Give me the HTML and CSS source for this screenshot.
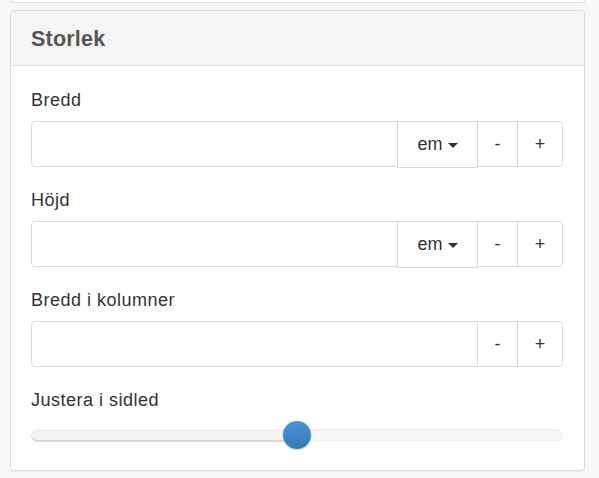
FILE: index.html
```html
<!DOCTYPE html>
<html lang="sv">
<head>
<meta charset="utf-8">
<link rel="stylesheet" href="styles.css">
</head>
<body>
<div class="page">
  <div class="prev-panel"></div>
  <div class="panel">
    <div class="panel-heading"><h3 class="panel-title">Storlek</h3></div>
    <div class="panel-body">
      <div class="form-group">
        <label class="label">Bredd</label>
        <div class="input-group">
          <input class="form-control" type="text">
          <button class="btn btn-unit">em <span class="caret"></span></button>
          <button class="btn btn-minus">-</button>
          <button class="btn btn-plus">+</button>
        </div>
      </div>
      <div class="form-group">
        <label class="label">Höjd</label>
        <div class="input-group">
          <input class="form-control" type="text">
          <button class="btn btn-unit">em <span class="caret"></span></button>
          <button class="btn btn-minus">-</button>
          <button class="btn btn-plus">+</button>
        </div>
      </div>
      <div class="form-group">
        <label class="label">Bredd i kolumner</label>
        <div class="input-group">
          <input class="form-control" type="text">
          <button class="btn btn-minus">-</button>
          <button class="btn btn-plus">+</button>
        </div>
      </div>
      <div class="form-group last">
        <label class="label">Justera i sidled</label>
        <div class="slider">
          <div class="slider-fill" style="width: 50%"></div>
          <div class="slider-handle" style="left: 50%"></div>
        </div>
      </div>
    </div>
  </div>
</div>
</body>
</html>
```
FILE: styles.css
```css
* { box-sizing: border-box; }
html, body { margin: 0; padding: 0; }
body {
  background: #f8f8f8;
  font-family: "Liberation Sans", Arial, Helvetica, sans-serif;
  color: #333;
  width: 599px;
  height: 478px;
  overflow: hidden;
}
.page {
  padding: 0 14px 0 10px;
}
.prev-panel {
  height: 3px;
  background: #fff;
  border: 1px solid #ddd;
  border-top: none;
  border-radius: 0 0 4px 4px;
  margin-bottom: 7px;
}
.panel {
  background: #fff;
  border: 1px solid #ddd;
  border-radius: 4px;
  height: 461px;
  box-shadow: 0 1px 1px rgba(0,0,0,0.04);
}
.panel-heading {
  background: #f5f5f5;
  border-bottom: 1px solid #ddd;
  border-radius: 3px 3px 0 0;
  height: 55px;
  padding: 0 20px;
  display: flex;
  align-items: center;
}
.panel-title {
  margin: 0;
  font-size: 21.5px;
  font-weight: bold;
  color: #555;
  line-height: 24px;
  letter-spacing: 0.2px;
  padding-top: 1px;
}
.panel-body {
  padding: 22px 21px 0 20px;
}
.form-group {
  margin-bottom: 21px;
}
.label {
  display: block;
  font-size: 18px;
  line-height: 24px;
  letter-spacing: 0.5px;
  color: #333;
  margin-bottom: 9px;
}
.input-group {
  display: flex;
  height: 46px;
}
.form-control {
  flex: 1;
  min-width: 0;
  height: 46px;
  border: 1px solid #dadada;
  border-radius: 4px 0 0 4px;
  background: #fff;
  padding: 0 12px;
  font: inherit;
  outline: none;
}
.btn {
  height: 46px;
  background: #fff;
  border: 1px solid #dadada;
  border-left: none;
  font-family: "Liberation Sans", Arial, sans-serif;
  font-size: 18px;
  color: #333;
  padding: 0;
  display: flex;
  align-items: center;
  justify-content: center;
}
.btn-unit {
  width: 81px;
  border-left: 1px solid #dadada;
  margin-left: -1px;
  height: 47px;
}
.btn-minus { width: 40px; }
.btn-plus {
  width: 45px;
  border-radius: 0 4px 4px 0;
}
.caret {
  display: inline-block;
  width: 0;
  height: 0;
  margin-left: 5px;
  border-top: 5px solid #333;
  border-left: 5px solid transparent;
  border-right: 5px solid transparent;
  position: relative;
  top: 1px;
}
.slider {
  position: relative;
  margin-top: 17px;
  height: 13px;
  border-radius: 7px;
  background: #f5f5f5;
  box-shadow: inset 0 1px 2px rgba(0,0,0,0.06);
}
.slider-fill {
  height: 13px;
  border-radius: 7px 0 0 7px;
  background: #f2f2f2;
  box-shadow: inset 0 -2px 0 rgba(0,0,0,0.10);
}
.slider-handle {
  position: absolute;
  top: -8px;
  width: 28px;
  height: 28px;
  margin-left: -14px;
  border-radius: 50%;
  background: linear-gradient(to bottom, #4a93d6, #337ab7);
  box-shadow: 0 1px 2px rgba(0,0,0,0.2);
}
```
